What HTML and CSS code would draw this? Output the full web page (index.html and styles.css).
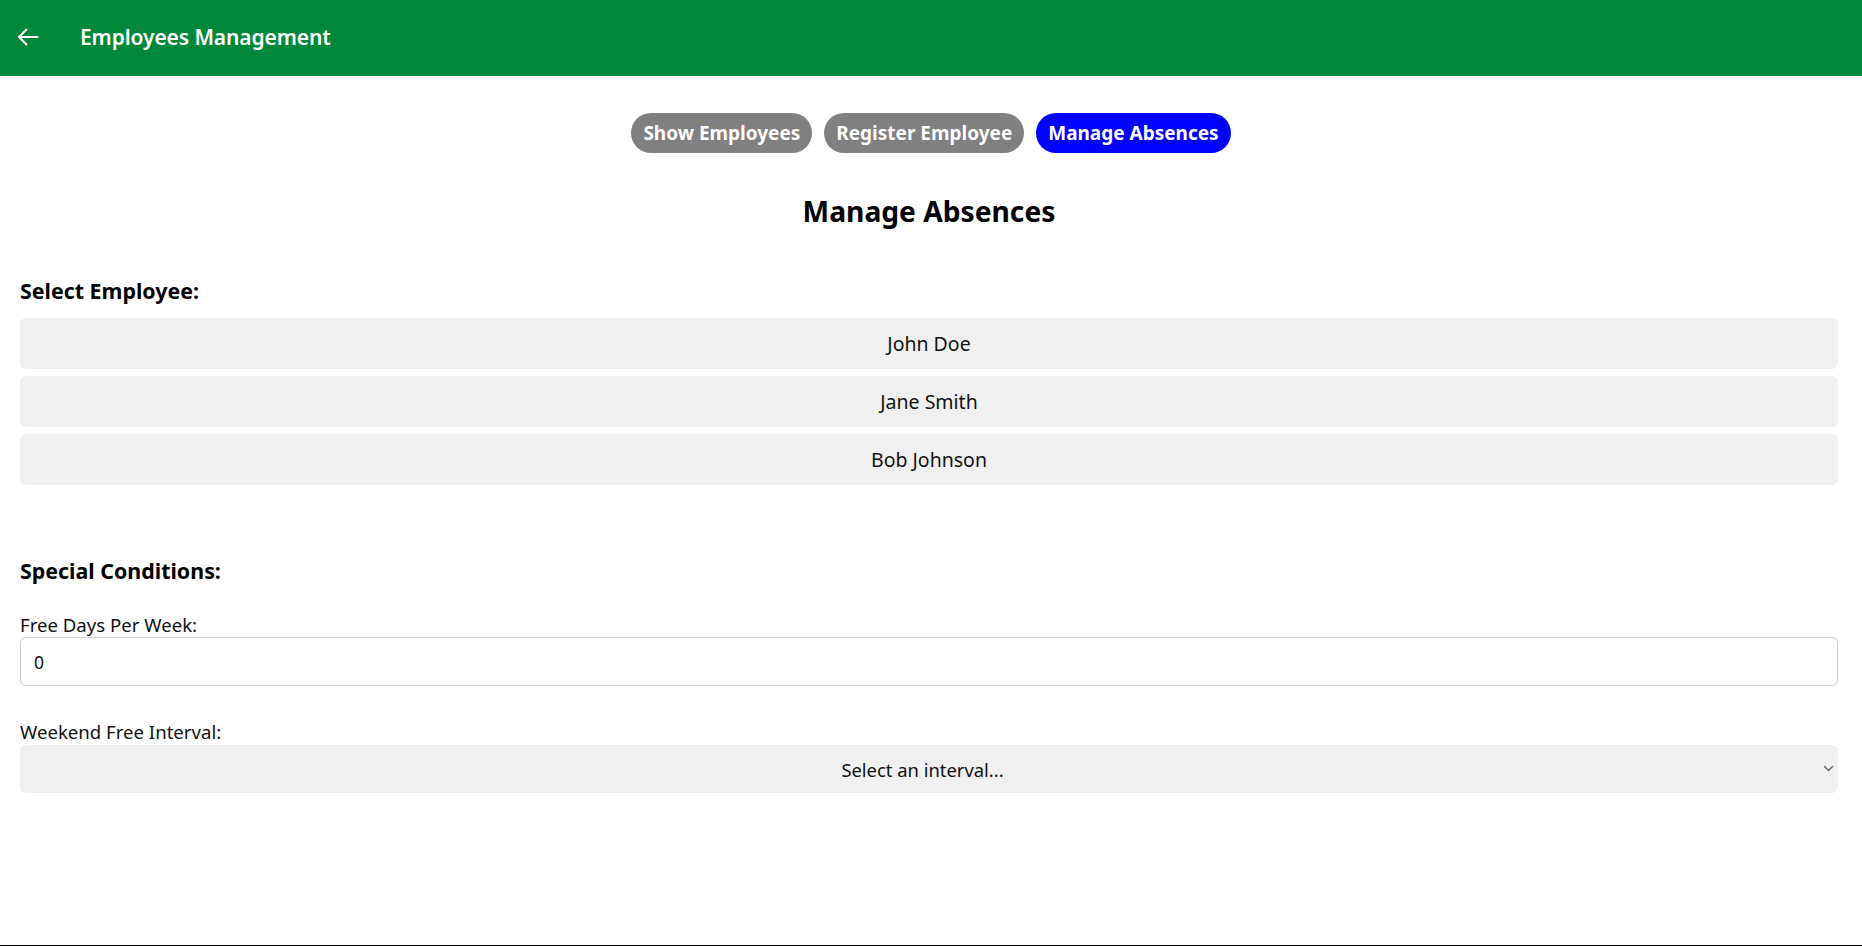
FILE: index.html
```html
<!DOCTYPE html>
<html lang="en">
<head>
<meta charset="utf-8">
<title>Employees Management</title>
<link rel="stylesheet" href="styles.css">
</head>
<body>
<div class="app">
  <header class="topbar">
    <button class="back" aria-label="Back">
      <svg width="24" height="24" viewBox="0 0 24 24" fill="none" stroke="#ffffff" stroke-width="2" stroke-linecap="round" stroke-linejoin="round"><path d="M21.5 12H3"/><path d="M10.5 4.5L3 12l7.5 7.5"/></svg>
    </button>
    <h1 class="topbar-title">Employees Management</h1>
  </header>
  <main class="content">
    <nav class="tabs">
      <button class="tab">Show Employees</button>
      <button class="tab">Register Employee</button>
      <button class="tab tab-active">Manage Absences</button>
    </nav>
    <h2 class="page-title">Manage Absences</h2>

    <h3 class="section-title">Select Employee:</h3>
    <div class="employee-list">
      <button class="employee">John Doe</button>
      <button class="employee">Jane Smith</button>
      <button class="employee">Bob Johnson</button>
    </div>

    <h3 class="section-title conditions">Special Conditions:</h3>
    <label class="field-label" for="freeDays">Free Days Per Week:</label>
    <input class="text-input" id="freeDays" type="text" value="0">

    <label class="field-label interval-label" for="interval">Weekend Free Interval:</label>
    <div class="select-wrap">
      <select class="select" id="interval">
        <option>Select an interval...</option>
        <option>Every week</option>
        <option>Every 2 weeks</option>
        <option>Every 3 weeks</option>
        <option>Every 4 weeks</option>
      </select>
      <svg class="chevron" width="11" height="7" viewBox="0 0 11 7" fill="none" stroke="#666666" stroke-width="1.5" stroke-linecap="round" stroke-linejoin="round"><path d="M1.5 1.5l4 4 4-4"/></svg>
    </div>
  </main>
</div>
</body>
</html>
```

FILE: styles.css
```css
* {
  box-sizing: border-box;
}

html, body {
  margin: 0;
  padding: 0;
  background: #ffffff;
}

body {
  font-family: "Noto Sans", "Open Sans", "Liberation Sans", sans-serif;
  color: #000000;
}

.app {
  min-height: 946px;
  height: 100vh;
  border-bottom: 1px solid #000000;
}

.topbar {
  height: 76px;
  background: #00883a;
  display: flex;
  align-items: center;
  padding-left: 16px;
}

.back {
  background: none;
  border: none;
  padding: 0;
  width: 24px;
  height: 24px;
  display: flex;
  align-items: center;
  justify-content: center;
  margin-top: -3px;
  cursor: pointer;
}

.topbar-title {
  margin: -2px 0 0 40px;
  font-size: 21px;
  font-weight: 600;
  color: #ffffff;
  letter-spacing: -0.1px;
}

.content {
  padding: 0 24px 0 20px;
}

.tabs {
  display: flex;
  justify-content: center;
  gap: 12px;
  margin-top: 37px;
  padding-left: 4px;
}

.tab {
  height: 40px;
  padding: 0 12px;
  border: none;
  border-radius: 20px;
  background: #808080;
  color: #ffffff;
  font-family: inherit;
  font-size: 19px;
  font-weight: 700;
  cursor: pointer;
}

.tab-active {
  background: #0000ff;
}

.page-title {
  margin: 41px 0 0;
  text-align: center;
  font-size: 28.2px;
  line-height: 35px;
  font-weight: 700;
}

.section-title {
  margin: 49px 0 0;
  font-size: 21.4px;
  line-height: 26px;
  font-weight: 700;
}

.employee-list {
  display: flex;
  flex-direction: column;
  gap: 7px;
  margin-top: 14px;
}

.employee {
  height: 51px;
  border: none;
  border-radius: 6px;
  background: #f0f0f0;
  font-family: inherit;
  font-size: 19.5px;
  color: #111111;
  cursor: pointer;
}

.conditions {
  margin-top: 73px;
}

.field-label {
  display: block;
  margin-top: 29px;
  font-size: 18.6px;
  line-height: 24px;
  color: #111111;
}

.interval-label {
  margin-top: 34px;
}

.text-input {
  display: block;
  width: 100%;
  height: 49px;
  margin-top: 0;
  padding: 0 13px;
  border: 1px solid #cccccc;
  border-radius: 6px;
  font-family: inherit;
  font-size: 17.5px;
  color: #111111;
  background: #ffffff;
}

.select-wrap {
  position: relative;
  margin-top: 1px;
}

.select {
  display: block;
  width: 100%;
  height: 48px;
  padding: 0 13px 0 0;
  border: none;
  border-radius: 6px;
  background: #f0f0f0;
  font-family: inherit;
  font-size: 18.4px;
  color: #111111;
  text-align: center;
  text-align-last: center;
  appearance: none;
  -webkit-appearance: none;
}

.chevron {
  position: absolute;
  right: 4px;
  top: 20px;
  pointer-events: none;
}
```
